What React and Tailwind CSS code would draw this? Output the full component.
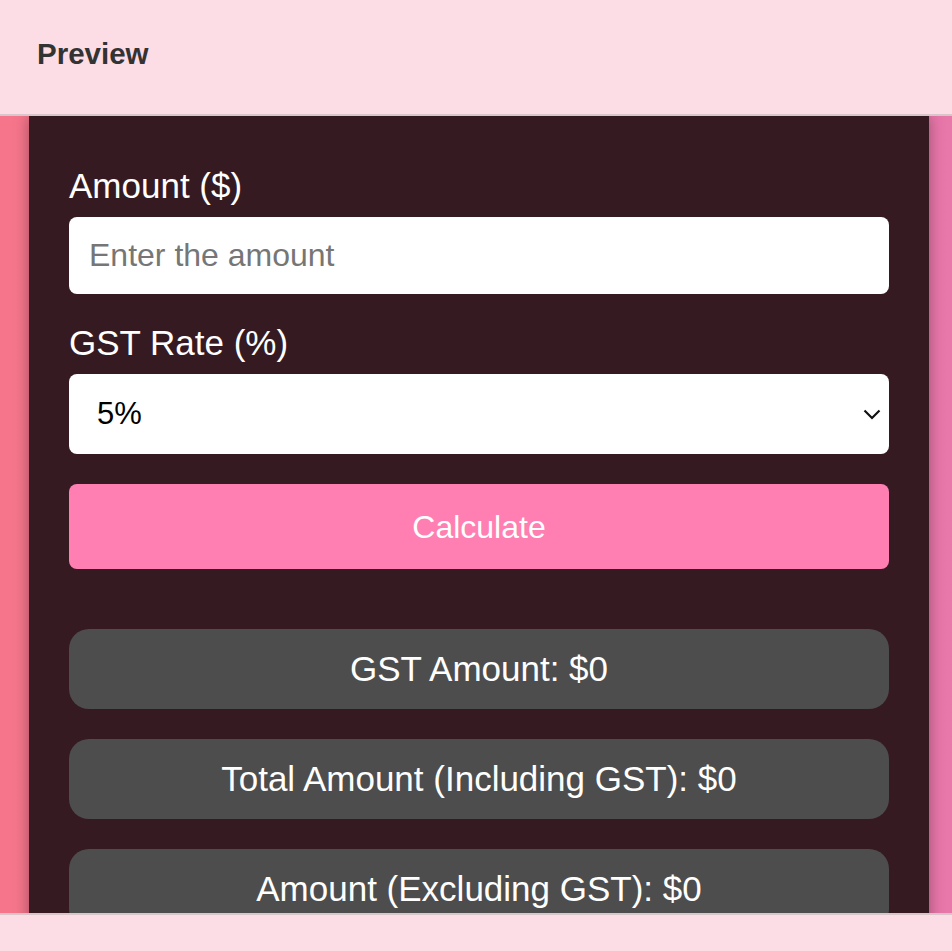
import React, { useState } from "react";

const rates = ["5%", "12%", "18%", "28%"];

const ResultRow = ({ children }) => (
  <div className="h-[80px] rounded-[20px] bg-[#4d4d4d] flex items-center justify-center text-white text-[35px] leading-[38px]">
    {children}
  </div>
);

const App = () => {
  const [amount, setAmount] = useState("");
  const [rate, setRate] = useState("5%");
  const [gst, setGst] = useState(0);

  const calc = () => {
    const a = parseFloat(amount) || 0;
    setGst(+((a * parseFloat(rate)) / 100).toFixed(2));
  };

  const total = (parseFloat(amount) || 0) + gst;

  return (
    <div
      className="h-[951px] flex flex-col bg-[#fcdde6] overflow-hidden"
      style={{ fontFamily: '"Liberation Sans", Arial, sans-serif' }}
    >
      <header className="h-[116px] shrink-0 border-b-2 border-[#d8c6cb] flex items-center pl-[37px] pb-[6px]">
        <h1 className="text-[29.5px] font-bold text-[#333333]">Preview</h1>
      </header>

      <main className="flex-1 min-h-0 overflow-hidden bg-gradient-to-r from-[#f7758b] to-[#e877aa] pl-[29px]">
        <div className="w-[900px] bg-[#351a21] shadow-[0_0_14px_rgba(0,0,0,0.35)] px-[40px] pt-[51px] pb-10 flex flex-col">
          <label className="text-white text-[35px] leading-[38px]">Amount ($)</label>
          <input
            type="text"
            value={amount}
            onChange={(e) => setAmount(e.target.value)}
            placeholder="Enter the amount"
            className="mt-3 h-[77px] rounded-lg bg-white px-5 text-[32px] text-black placeholder:text-[#767676] outline-none"
          />

          <label className="mt-[30px] text-white text-[35px] leading-[38px]">GST Rate (%)</label>
          <div className="relative mt-3">
            <select
              value={rate}
              onChange={(e) => setRate(e.target.value)}
              className="w-full h-[80px] appearance-none rounded-lg bg-white pl-7 text-[31px] text-black outline-none"
            >
              {rates.map((r) => (
                <option key={r}>{r}</option>
              ))}
            </select>
            <svg
              className="absolute right-[8px] top-[35px] pointer-events-none"
              width="18"
              height="11"
              viewBox="0 0 18 11"
              fill="none"
            >
              <path d="M1.5 1.5 L9 9 L16.5 1.5" stroke="#111" strokeWidth="2.2" />
            </svg>
          </div>

          <button
            onClick={calc}
            className="mt-[30px] h-[85px] rounded-lg bg-[#ff7fb2] text-white text-[32px]"
          >
            Calculate
          </button>

          <div className="mt-[60px] flex flex-col gap-[30px]">
            <ResultRow>GST Amount: ${gst}</ResultRow>
            <ResultRow>Total Amount (Including GST): ${total}</ResultRow>
            <ResultRow>Amount (Excluding GST): ${parseFloat(amount) || 0}</ResultRow>
          </div>
        </div>
      </main>

      <footer className="h-[38px] shrink-0 border-t-2 border-[#d8c6cb] bg-[#fcdde6]" />
    </div>
  );
};

export default App;
